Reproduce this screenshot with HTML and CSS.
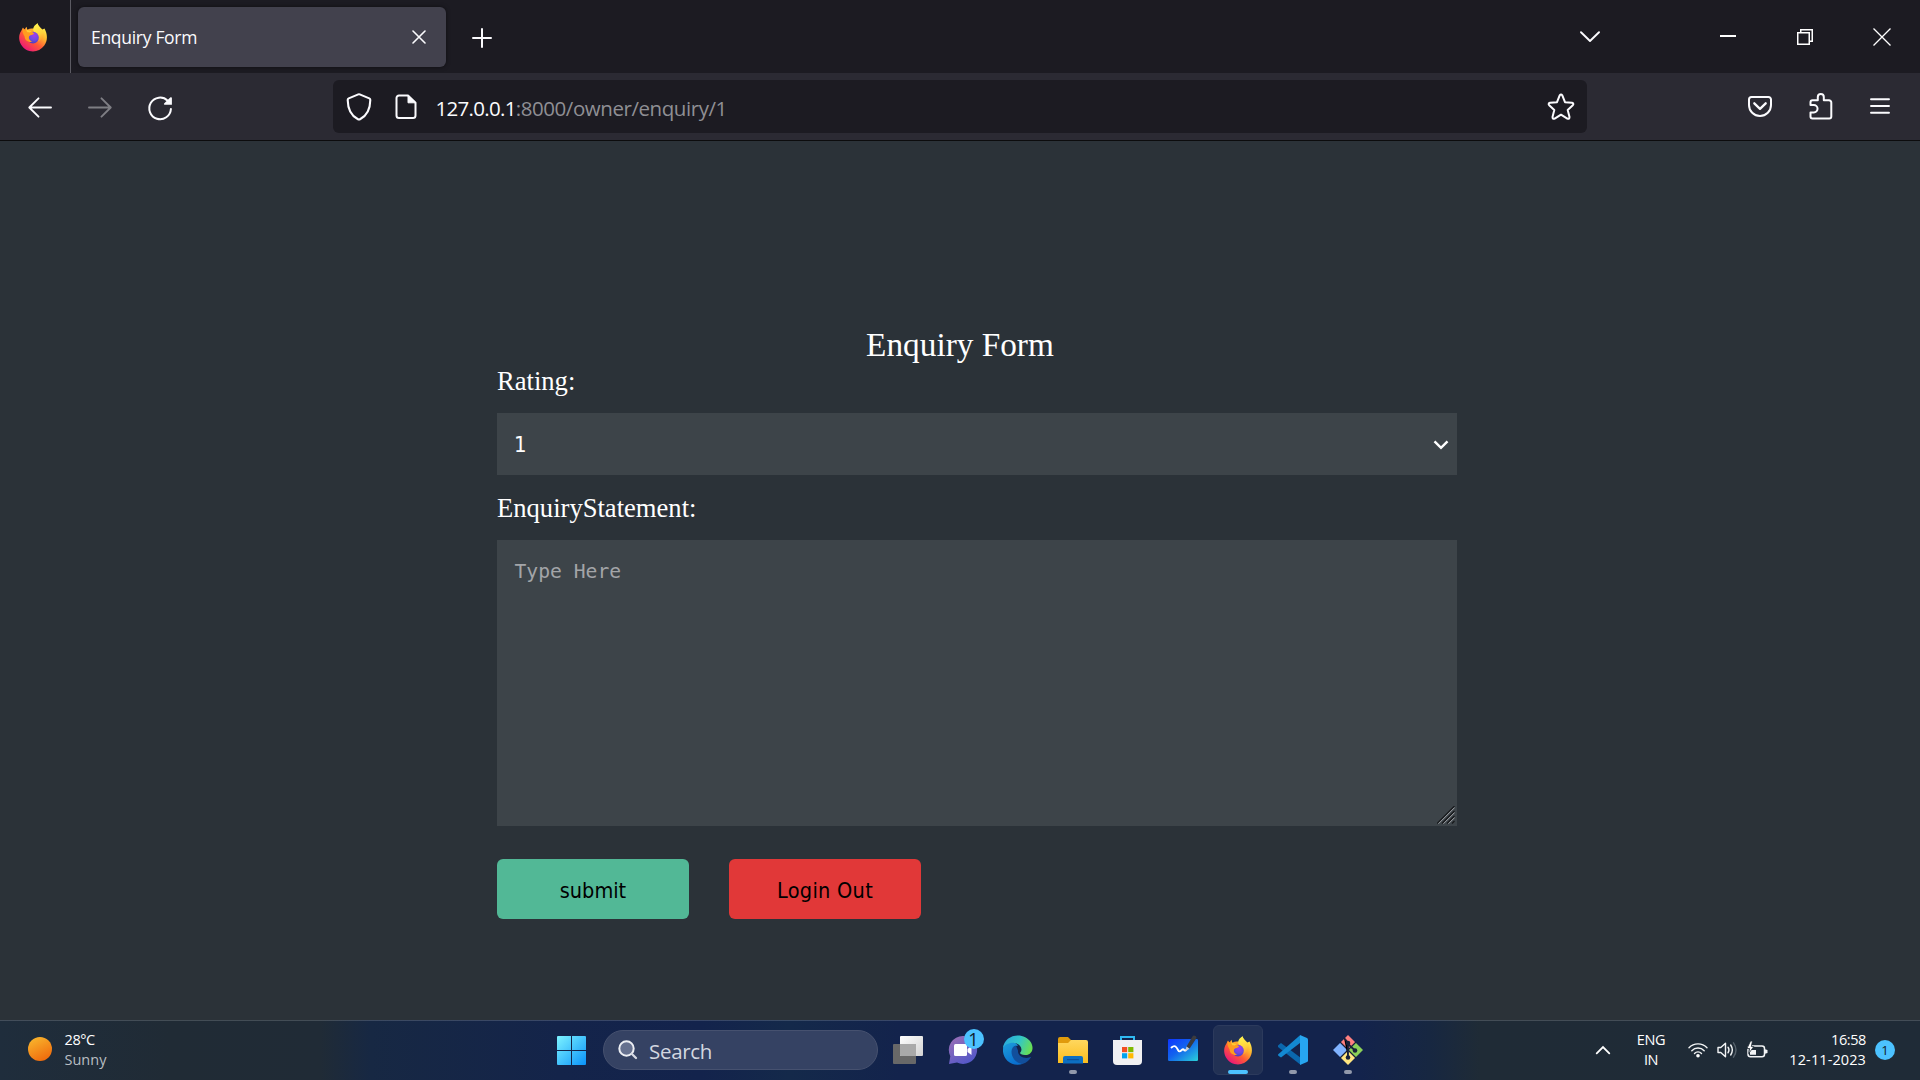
FILE: index.html
```html
<!DOCTYPE html>
<html lang="en">
<head>
<meta charset="utf-8">
<title>Enquiry Form</title>
<link rel="stylesheet" href="styles.css">
</head>
<body>
<svg class="defs" width="0" height="0" aria-hidden="true">
  <defs>
    <linearGradient id="foxBody" x1="0.85" y1="0.1" x2="0.2" y2="0.95">
      <stop offset="0" stop-color="#fff44f"/><stop offset=".3" stop-color="#ffb52e"/><stop offset=".6" stop-color="#ff5a36"/><stop offset="1" stop-color="#e9147c"/>
    </linearGradient>
    <radialGradient id="foxGlobe" cx=".6" cy=".3" r=".7">
      <stop offset="0" stop-color="#a43bf0"/><stop offset=".6" stop-color="#6c4be0"/><stop offset="1" stop-color="#4a3fc0"/>
    </radialGradient>
    <linearGradient id="foxFlame" x1="0.4" y1="0" x2="0.6" y2="1">
      <stop offset="0" stop-color="#fff44f"/><stop offset=".6" stop-color="#ffd23c"/><stop offset="1" stop-color="#ff9a2e"/>
    </linearGradient>
    <linearGradient id="win" x1="0" y1="0" x2="1" y2="1"><stop offset="0" stop-color="#7df3ff"/><stop offset="1" stop-color="#0a93fa"/></linearGradient>
    <linearGradient id="sun" x1=".2" y1="0" x2=".7" y2="1"><stop offset="0" stop-color="#f8b62d"/><stop offset="1" stop-color="#f0690c"/></linearGradient>
    <linearGradient id="chat" x1="0" y1="0" x2=".6" y2="1"><stop offset="0" stop-color="#9f70b4"/><stop offset="1" stop-color="#5558c8"/></linearGradient>
    <linearGradient id="edgeTop" x1="0" y1=".3" x2="1" y2=".6"><stop offset="0" stop-color="#2aa8dc"/><stop offset=".5" stop-color="#32c6c9"/><stop offset="1" stop-color="#6be04e"/></linearGradient>
    <linearGradient id="edgeLeft" x1="0" y1="0" x2=".5" y2="1"><stop offset="0" stop-color="#1ea0dc"/><stop offset="1" stop-color="#0a6fcf"/></linearGradient>
    <linearGradient id="folder" x1="0" y1="0" x2="0" y2="1"><stop offset="0" stop-color="#ffd75e"/><stop offset="1" stop-color="#fbbd1f"/></linearGradient>
    <linearGradient id="board" x1="0" y1="0" x2="1" y2="1"><stop offset="0" stop-color="#0f35ff"/><stop offset=".45" stop-color="#1263ee"/><stop offset="1" stop-color="#2ad0d8"/></linearGradient>
    <linearGradient id="pane" x1="0" y1="0" x2="1" y2="1"><stop offset="0" stop-color="#ffffff"/><stop offset="1" stop-color="#d2d2d2"/></linearGradient>
    <symbol id="firefox" viewBox="0 0 30 30">
      <path fill="url(#foxBody)" d="M5 5.5 6.4 7.8 8.4 4.8 9.3 7.7C11.4 6.5 14 6.2 16 6.8L19.5 1.2C20.5 4.3 22.5 5.5 24.5 7.5L26.5 6.5C29.5 12 30 18.4 26.3 23.6 20.2 32 7.8 31 3 22.5.1 17.2.9 12.5 3.3 8.8Z"/>
      <path fill="url(#foxFlame)" d="M19.5 1.2C14.8 4.4 14.3 7.5 16.3 10 20.5 11.2 22 15.2 20 19.4 24.5 18 26.5 13.7 25.2 9.5 23.8 6.8 20.2 5 19.5 1.2Z"/>
      <circle cx="15" cy="15.6" r="5.8" fill="url(#foxGlobe)"/>
      <path fill="#ff9c20" d="M4.7 6.3C7 8.1 9.2 8.2 12 8.2 13.3 9 14.1 9.8 16.2 11.6 15.5 12.9 12.3 13.2 11.4 14 10.2 15.4 11.1 18.7 14.5 19.6 10.4 20.8 6.8 18.3 6.6 14.4 4.8 11.8 4 9 4.7 6.3Z"/>
      <path fill="#ffce35" d="M8.4 5 9.4 8 14 9.1 11.5 10.4C9 10.5 7.9 9.5 8.4 5Z"/>
    </symbol>
  </defs>
</svg>

<div class="screen">
  <header class="tabstrip">
    <div class="pinned"><svg width="30" height="30"><use href="#firefox"/></svg></div>
    <div class="tab">
      <span class="tab-title">Enquiry Form</span>
      <svg width="14" height="14" viewBox="0 0 14 14" class="line"><path stroke-width="1.6" d="M1 1 13 13M13 1 1 13"/></svg>
    </div>
    <svg class="line new-tab" width="20" height="20" viewBox="0 0 20 20"><path stroke-width="2" d="M10 1V19M1 10H19"/></svg>
    <div class="window-controls">
      <div class="control list"><svg class="line" width="20" height="12" viewBox="0 0 20 12"><path stroke-width="1.9" d="M1 1.2 10 10 19 1.2"/></svg></div>
      <div class="control minimize"><svg width="16" height="2" viewBox="0 0 16 2"><path fill="#fff" d="M0 0H16V2H0Z"/></svg></div>
      <div class="control"><svg width="16" height="16" viewBox="0 0 16 16"><path fill="none" stroke="#fff" stroke-width="1.5" d="M.75 3.75H12.25V15.25H.75ZM3.75 3V.75H15.25V12.25H13"/></svg></div>
      <div class="control"><svg width="18" height="18" viewBox="0 0 18 18"><path fill="none" stroke="#fff" stroke-width="1.3" d="M.5.5 17.5 17.5M17.5.5.5 17.5"/></svg></div>
    </div>
  </header>

  <nav class="toolbar">
    <div class="nav-group">
      <div class="nav-button"><svg class="line" width="30" height="30" viewBox="0 0 30 30"><path stroke-width="1.9" d="M26 15.5H4.5M13.5 6.3 4.3 15.5 13.5 24.7"/></svg></div>
      <div class="nav-button faded"><svg class="line" width="30" height="30" viewBox="0 0 30 30"><path stroke-width="1.9" d="M4 15.5H25.5M16.5 6.3 25.7 15.5 16.5 24.7"/></svg></div>
      <div class="nav-button"><svg class="line" width="30" height="30" viewBox="0 0 30 30"><path stroke-width="2" d="M25.9 17A10.8 10.8 0 1 1 22.7 8.7"/><path fill="#fbfbfe" stroke="none" d="M26.2 5.2C26.5 5.2 26.9 5.5 26.9 6V12.7H19.6C18.9 12.7 18.7 12 19.1 11.5L25.2 5.6C25.5 5.3 25.8 5.2 26.2 5.2Z"/></svg></div>
    </div>
    <div class="address">
      <svg class="line shield" width="26" height="28" viewBox="0 0 26 28"><path stroke-width="2.1" d="M12.3 1.4Q13 1.1 13.7 1.4L23.3 5.4Q24.3 5.9 24.3 7C24.2 15.5 21.5 22.5 14 26.3Q13 26.8 12 26.3C4.5 22.5 1.8 15.5 1.7 7Q1.7 5.9 2.7 5.4Z"/></svg>
      <svg class="line doc" width="22" height="26" viewBox="0 0 22 26"><path stroke-width="2" d="M13 1.5H4A2.5 2.5 0 0 0 1.5 4V21.5A2.5 2.5 0 0 0 4 24H18A2.5 2.5 0 0 0 20.5 21.5V8.8Z"/><path fill="#fbfbfe" d="M13 1.5V8.8H20.5Z"/></svg>
      <span class="url"><b>127.0.0.1</b>:8000/owner/enquiry/1</span>
      <svg class="line star" width="28" height="28" viewBox="0 0 28 28"><path stroke-width="2" d="M12.7 2.3Q14 .6 15.3 2.3L18 9.2 25 9.8Q27.2 10.4 25.8 12.2L20.7 17 22.5 24Q22.5 26.4 20.3 25.6L14 21.7 7.7 25.6Q5.5 26.4 5.5 24L7.3 17 2.2 12.2Q.8 10.4 3 9.8L10 9.2Z"/></svg>
    </div>
    <div class="nav-group end">
      <div class="nav-button"><svg class="line" width="30" height="30" viewBox="0 0 30 30"><path stroke-width="2" d="M6.5 5H23.5A2.5 2.5 0 0 1 26 7.5V13A11 11 0 0 1 4 13V7.5A2.5 2.5 0 0 1 6.5 5Z"/><path stroke-width="2.3" d="M9.3 11.3 15 16.8 20.7 11.3"/></svg></div>
      <div class="nav-button"><svg class="line" width="30" height="30" viewBox="0 0 30 30"><path stroke-width="2" d="M5.5 13V10.3A2 2 0 0 1 7.500 8.300H12.800V5A3 3 0 0 1 18.800 5V8.300H24A2.300 2.300 0 0 1 26.300 10.600V24.600A2 2 0 0 1 24.300 26.600H7.500A2 2 0 0 1 5.500 24.600V20.500H8.800A3.750 3.750 0 0 0 8.800 13Z"/></svg></div>
      <div class="nav-button"><svg class="line" width="30" height="30" viewBox="0 0 30 30"><path stroke-width="1.9" d="M6 7.3H24M6 14H24M6 20.7H24"/></svg></div>
    </div>
  </nav>

  <main class="page">
    <form class="enquiry">
      <h1>Enquiry Form</h1>
      <label class="rating-label" for="rating">Rating:</label>
      <div class="field">
        <select id="rating"><option>1</option></select>
        <svg class="arrow" width="16" height="10" viewBox="0 0 16 10"><path fill="none" stroke="#fff" stroke-width="2.4" d="M1.500 1.300 8 7.800 14.500 1.300"/></svg>
      </div>
      <label class="statement-label" for="statement">EnquiryStatement:</label>
      <div class="field">
        <textarea id="statement" placeholder="Type Here"></textarea>
        <svg class="grip" width="18" height="18" viewBox="0 0 18 18"><path fill="none" stroke="#17191c" stroke-width="1.2" d="M0 17.5 17.5 0M5 17.5 17.5 5M10 17.5 17.5 10M15 17.5 17.5 15"/><path fill="none" stroke="#a3a6a9" stroke-width="1" d="M1.5 17.7 17.7 1.5M6.5 17.7 17.7 6.5M11.5 17.7 17.7 11.5"/></svg>
      </div>
      <div class="actions">
        <button type="button" class="submit">submit</button>
        <button type="button" class="logout">Login Out</button>
      </div>
    </form>
  </main>

  <footer class="taskbar">
    <div class="weather">
      <svg width="24" height="24" viewBox="0 0 24 24"><circle cx="12" cy="12" r="12" fill="url(#sun)"/></svg>
      <div class="stack"><span>28°C</span><span class="dim">Sunny</span></div>
    </div>
    <div class="apps">
      <svg width="29" height="29" viewBox="0 0 29 29"><path fill="url(#win)" d="M0 1Q0 0 1 0H14V14H0ZM15 0H28Q29 0 29 1V14H15ZM0 15H14V29H1Q0 29 0 28ZM15 15H29V28Q29 29 28 29H15Z"/></svg>
      <div class="search">
        <svg width="20" height="20" viewBox="0 0 20 20"><circle cx="8.500" cy="8.500" r="7.200" fill="#66718f" stroke="#eceef3" stroke-width="2"/><path stroke="#d5d8e2" stroke-width="2.300" stroke-linecap="round" d="M13.700 13.700 18 18"/></svg>
        <span>Search</span>
      </div>
      <div class="app"><svg width="30" height="30" viewBox="0 0 30 30"><rect y="9" width="23" height="20" rx="1" fill="#686868"/><rect x="7" y="1" width="23" height="20" rx="1" fill="url(#pane)"/><path fill="#a9a9a9" d="M7 9H23V21H8Q7 21 7 20Z"/></svg></div>
      <div class="app"><svg width="30" height="30" viewBox="0 0 30 30"><path fill="url(#chat)" d="M15 1A14 14 0 1 1 9 27.600L1 29 2.300 21.300A14 14 0 0 1 15 1Z"/><rect x="6" y="9" width="13" height="12" rx="1.500" fill="#fff"/><path fill="#fff" d="M19.500 14 23.500 11V20L19.500 17Z"/></svg><i class="badge chat-badge">1</i></div>
      <div class="app"><svg width="30" height="30" viewBox="0 0 30 30"><path fill="url(#edgeLeft)" d="M0 14C1 4 13 6 15 11 12.500 9.500 10 13 10 17 10 23 14 27 20 28.800 9 33-1 24 0 14Z"/><path fill="#124f9c" d="M13 10.500C5 12 8 28 19.500 29 24 27.500 26.500 25 28.300 21.800 23.500 24.500 14.500 22.500 15 15.500Z"/><path fill="url(#edgeTop)" d="M0 13.500C1-1 21-4 28 7.500 32 15 27.500 20.500 22 20 18 19.800 16.300 18.300 17.500 17.300 20.500 13 16 8 10 7.800 5 7.800 1.500 10 0 13.500Z"/></svg></div>
      <div class="app"><svg width="30" height="30" viewBox="0 0 30 30"><path fill="#e09b0c" d="M0 4Q0 2 2 2H10L13 5H20V12H0Z"/><path fill="url(#folder)" d="M0 8H10L13 5H28Q30 5 30 7V28H0Z"/><path fill="#0d6fc2" d="M5 28.500V23Q5 21 7 21H23Q25 21 25 23V28.500Z"/><path stroke="#0a4a94" d="M9 24.700H21"/></svg><i class="running"></i></div>
      <div class="app"><svg width="30" height="30" viewBox="0 0 30 30"><path fill="none" stroke="#2fb9f2" stroke-width="2" d="M8 6V2H21V6"/><path fill="#f1f1f2" d="M0 5H29V26Q29 30 25 30H4Q0 30 0 26Z"/><path fill="#f25022" d="M9 12H14.200V17.200H9Z"/><path fill="#7fba00" d="M15.200 12H20.400V17.200H15.200Z"/><path fill="#00a4ef" d="M9 18.200H14.200V23.400H9Z"/><path fill="#ffb900" d="M15.200 18.200H20.400V23.400H15.200Z"/></svg></div>
      <div class="app"><svg width="30" height="30" viewBox="0 0 30 30"><rect y="4" width="30" height="22" rx="1.200" fill="url(#board)"/><path fill="none" stroke="#fff" stroke-width="1.900" stroke-linecap="round" d="M3.500 12.500C7 9.500 8.500 12 10 15 12 19 14 13 15.700 14.500 16.500 16 17.500 16 18.500 14.500"/><path fill="#3b3b3e" d="M18.500 11.500 24.500 1.500Q25.500-.2 27.500 1 29 2.200 28.200 3.500L21.500 13.700Z"/><path fill="#c9ccd2" d="M18.500 11.500 21.500 13.700 17.300 16.500Z"/></svg></div>
      <div class="app"><div class="tile"><svg width="30" height="30"><use href="#firefox"/></svg></div><i class="running current"></i></div>
      <div class="app"><svg width="30" height="30" viewBox="0 0 30 30"><path fill="#0b67ad" d="M0 10.500 3 8 23 23V29.500L21.500 29 0 12Z"/><path fill="#1389d2" d="M0 19.500 22 .3 23 7.300 3 22.500 .3 20.700Z"/><path fill="#27a6f0" d="M22 0 29 3Q30 3.500 30 4.500V25.500Q30 26.500 29 27L22 30Z"/></svg><i class="running"></i></div>
      <div class="app"><svg width="30" height="30" viewBox="0 0 30 30"><path fill="#ff8080" d="M15 0 22.500 7.500 15 15 7.500 7.500Z"/><path fill="#80b3ff" d="M7.500 7.500 15 15 7.500 22.500 0 15Z"/><path fill="#8bd158" d="M22.500 7.500 30 15 22.500 22.500 15 15Z"/><path fill="#ffe680" d="M15 15 22.500 22.500 15 30 7.500 22.500Z"/><g stroke="#18213a" stroke-width="1.200"><path d="M7 7 23 23M23 7 7 23"/><path stroke-width="1.800" d="M11 3 15 7.500V23M15 9 22 15.500"/></g><g fill="#18213a"><circle cx="15" cy="8" r="2.300"/><circle cx="22" cy="15.500" r="2.300"/><circle cx="15" cy="22.500" r="2.300"/></g></svg><i class="running"></i></div>
    </div>
    <div class="tray">
      <svg class="up" width="16" height="10" viewBox="0 0 16 10"><path fill="none" stroke="#fff" stroke-width="1.800" stroke-linecap="round" d="M1.700 8.300 8 2 14.300 8.300"/></svg>
      <div class="stack language"><span>ENG</span><span>IN</span></div>
      <svg class="wifi" width="20" height="16" viewBox="0 0 20 16"><g fill="none" stroke="#f2f4f5" stroke-width="1.400" stroke-linecap="round"><path d="M1 5.800A12.200 12.200 0 0 1 19 5.800M3.800 8.700A8.500 8.500 0 0 1 16.200 8.700M6.500 11.400A4.800 4.800 0 0 1 13.500 11.400"/></g><circle cx="10" cy="13.700" r="1.800" fill="#fff"/></svg>
      <svg class="volume" width="20" height="18" viewBox="0 0 20 18"><g fill="none" stroke="#f2f4f5" stroke-width="1.400" stroke-linecap="round" stroke-linejoin="round"><path d="M1 6.500H3.800L8.500 2.300V15.700L3.800 11.500H1ZM11 6.200Q13 9 11 11.800M13.700 4Q17 9 13.700 14"/><path stroke="#56616b" d="M16.500 1.800Q21.500 9 16.500 16.200"/></g></svg>
      <svg class="battery" width="21" height="18" viewBox="0 0 21 18"><rect x="1" y="5" width="16.500" height="10.800" rx="2.500" fill="none" stroke="#f2f4f5" stroke-width="1.500"/><path fill="#f2f4f5" d="M18 8.300 20.500 9V12L18 12.700ZM3 13.800V9H9V13.800Z"/><path fill="#fff" stroke="#202b35" stroke-width=".8" d="M3.500 0 0 7.500H2.600L1.700 12.500 6.800 5.500H4.300L5.500 0Z"/></svg>
      <div class="stack clock"><span>16:58</span><span class="date">12-11-2023</span></div>
      <i class="badge">1</i>
    </div>
  </footer>
</div>
</body>
</html>
```
FILE: styles.css
```css
* { box-sizing: border-box; }
body { margin: 0; background: #2b3238; }
.defs { position: absolute; }
svg { display: block; flex: none; }
.line { fill: none; stroke: #fbfbfe; stroke-linecap: round; stroke-linejoin: round; }

.screen {
  width: 1920px;
  height: 1080px;
  display: flex;
  flex-direction: column;
  overflow: hidden;
  font-family: "Open Sans", "Noto Sans", sans-serif;
  color: #fbfbfe;
}

/* Tab strip */
.tabstrip { height: 73px; flex: none; display: flex; align-items: center; background: #1c1b22; }
.pinned { width: 71px; height: 73px; padding: 21.5px 0 0 18px; border-right: 1px solid #5b5a62; }
.tab {
  width: 368px; height: 60px; margin: 0 26px 0 7px; padding: 0 20px 0 13px;
  display: flex; align-items: center; justify-content: space-between;
  background: #42414d; border-radius: 6px; box-shadow: 0 0 4px rgba(0, 0, 0, .5);
}
.tab-title { font-size: 17.5px; letter-spacing: -.3px; line-height: 24px; padding-top: 1px; }
.new-tab { margin-top: 2px; }
.window-controls { margin-left: auto; display: flex; }
.control { width: 77px; height: 71px; display: flex; align-items: center; justify-content: center; }
.control.list { margin-right: 61px; }
.minimize { padding-bottom: 2px; }

/* Navigation toolbar */
.toolbar { height: 68px; flex: none; display: flex; align-items: center; background: #2b2a33; border-bottom: 1px solid #0c0c0d; }
.nav-group { display: flex; width: 323px; margin-left: 10px; }
.nav-group.end { width: 180px; margin: 0 10px 0 auto; }
.nav-button { width: 60px; height: 60px; display: flex; align-items: center; justify-content: center; }
.faded { opacity: .4; }
.address { width: 1254px; height: 53px; display: flex; align-items: center; padding: 0 12px 0 12.5px; background: #1c1b22; border-radius: 6px; }
.doc { margin: 0 18.5px 0 23.5px; }
.url { font-size: 20.5px; letter-spacing: -.43px; line-height: 28px; color: #8f8f94; flex: 1; padding-top: 3px; }
.url b { font-weight: 400; color: #fbfbfe; letter-spacing: -.7px; }

/* Page */
.page { flex: 1; background: #2b3238; padding: 185px 0 0 497px; }
.enquiry { width: 960px; font-family: "Liberation Serif", serif; color: #fff; }
h1 { margin: 0; width: 926px; text-align: center; font-size: 33.3px; font-weight: 400; line-height: 38px; }
label { display: block; font-size: 26.6px; line-height: 30px; }
.rating-label { margin: 2px 0 17px; }
.statement-label { margin: 18px 0 17px; }
.field { position: relative; }
select, textarea { display: block; width: 100%; margin: 0; border: 0; border-radius: 0; background: #3d4449; color: #fff; appearance: none; outline: 0; }
select { height: 62px; padding: 0 17px; font: 22px "DejaVu Sans Condensed", "DejaVu Sans", sans-serif; font-stretch: condensed; }
textarea { height: 286px; padding: 20px 17.5px; resize: none; font: 19.7px/24px "DejaVu Sans Mono", monospace; }
textarea::placeholder { color: #a3a5a8; opacity: 1; }
.arrow { position: absolute; right: 8px; top: 27px; }
.grip { position: absolute; right: 2px; bottom: 2px; }
.actions { display: flex; gap: 40px; margin-top: 33px; }
button { width: 192px; height: 60px; border: 0; border-radius: 6px; padding: 2px 0 0; color: #000; font: 21.5px "DejaVu Sans Condensed", "DejaVu Sans", sans-serif; font-stretch: condensed; }
.submit { background: #52b896; }
.logout { background: #e13838; letter-spacing: .3px; }

/* Taskbar */
.taskbar {
  height: 60px; flex: none; display: flex; align-items: center;
  box-shadow: inset 0 1px rgba(255, 255, 255, .16);
  background: linear-gradient(90deg, #1f2d3c 0, #202b35 170px, #202b36 320px, #172843 370px, #14244a 560px, #13234c 700px, #14294a 790px, #13234c 900px, #13234c 1360px, #172741 1430px, #1f2b36 1480px, #1f2b37 100%);
}
.weather { display: flex; align-items: center; gap: 12.5px; width: 557px; padding-left: 28px; }
.weather svg { margin-bottom: 2px; }
.stack { display: flex; flex-direction: column; font-size: 14.5px; line-height: 20px; letter-spacing: -.4px; color: #fff; }
.dim { color: #b9bec3; letter-spacing: 0; }
.apps { display: flex; align-items: center; }
.search {
  width: 275px; height: 40px; margin: 0 2.5px 0 17px; padding-left: 14px;
  display: flex; align-items: center; gap: 11px;
  border: 1px solid #46516f; border-radius: 20px; background: #354263;
  font-size: 20.5px; color: #d3d7e0; letter-spacing: -.3px;
}
.search span { padding-top: 1px; }
.app { position: relative; width: 55px; height: 60px; display: flex; align-items: center; justify-content: center; }
.tile { width: 50px; height: 50px; display: flex; align-items: center; justify-content: center; border: 1px solid #2c3a5c; border-radius: 6px; background: #223154; }
.running { position: absolute; bottom: 6px; left: 23.5px; width: 8px; height: 4px; border-radius: 2px; background: #9299ab; }
.running.current { left: 17.5px; width: 20px; background: #4cc2ff; }
.badge { width: 20px; height: 20px; border-radius: 50%; background: #4cc2ff; color: #10202c; font-size: 13px; line-height: 20px; font-style: normal; text-align: center; }
.chat-badge { position: absolute; left: 28px; top: 9px; font-size: 18px; }
.tray { margin-left: auto; width: 325px; display: flex; align-items: center; }
.language { width: 40px; margin-left: 20px; align-items: center; }
.wifi { margin-left: 17px; }
.volume { margin-left: 9px; }
.battery { margin-left: 10px; }
.clock { width: 98px; align-items: flex-end; margin-right: 9px; }
.date { letter-spacing: .1px; }
```
